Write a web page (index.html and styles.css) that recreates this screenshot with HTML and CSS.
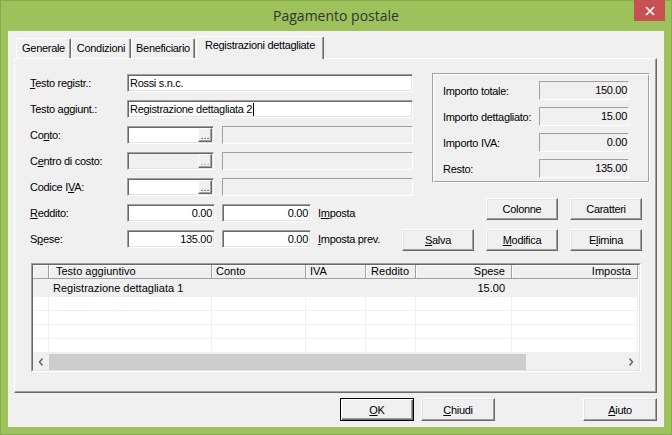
FILE: index.html
```html
<!DOCTYPE html>
<html lang="it">
<head>
<meta charset="utf-8">
<title>Pagamento postale</title>
<link rel="stylesheet" href="styles.css">
</head>
<body>
<div class="window">
  <div class="titlebar">
    <span></span>
    <span class="title">Pagamento postale</span>
    <span class="close"><svg width="10" height="10" viewBox="0 0 10 10"><path d="M1 1L9 9M9 1L1 9" stroke="#fff" stroke-width="1.7"/></svg></span>
  </div>
  <div class="client">
    <div class="tabs">
      <div class="tab t1">Generale</div>
      <div class="tab t2">Condizioni</div>
      <div class="tab t3">Beneficiario</div>
      <div class="tab active">Registrazioni dettagliate</div>
    </div>
    <div class="panel">
      <div class="top">
        <div class="form">
          <div class="row"><span class="lbl"><u>T</u>esto registr.:</span><div class="edit wide">Rossi s.n.c.</div></div>
          <div class="row"><span class="lbl">Testo a<u>g</u>giunt.:</span><div class="edit wide">Registrazione dettagliata 2<span class="caret"></span></div></div>
          <div class="row"><span class="lbl">Co<u>n</u>to:</span><div class="combo"><span class="dots">...</span></div><div class="static"></div></div>
          <div class="row"><span class="lbl">C<u>e</u>ntro di costo:</span><div class="combo disabled"><span class="dots">...</span></div><div class="static"></div></div>
          <div class="row"><span class="lbl">Codice I<u>V</u>A:</span><div class="combo"><span class="dots">...</span></div><div class="static"></div></div>
        </div>
        <div class="group">
          <div class="grow"><span class="glbl">Importo totale:</span><div class="ro">150.00</div></div>
          <div class="grow"><span class="glbl">Importo dettagliato:</span><div class="ro">15.00</div></div>
          <div class="grow"><span class="glbl">Importo IVA:</span><div class="ro">0.00</div></div>
          <div class="grow"><span class="glbl">Resto:</span><div class="ro">135.00</div></div>
        </div>
      </div>
      <div class="lower">
        <div class="lower-form">
          <div class="row"><span class="lbl"><u>R</u>eddito:</span><div class="edit num n1">0.00</div><div class="edit num n2">0.00</div><span class="after">I<u>m</u>posta</span></div>
          <div class="row"><span class="lbl">S<u>p</u>ese:</span><div class="edit num n1">135.00</div><div class="edit num n2">0.00</div><span class="after"><u>I</u>mposta prev.</span></div>
        </div>
        <div class="actions">
          <button class="btn b-col">Colonne</button>
          <button class="btn">Caratteri</button>
          <button class="btn"><u>S</u>alva</button>
          <button class="btn"><u>M</u>odifica</button>
          <button class="btn">E<u>l</u>imina</button>
        </div>
      </div>
      <div class="grid">
        <div class="grid-in">
          <div class="g-body">
            <div class="g-row g-head">
              <div class="gc"></div>
              <div class="gc c1">Testo aggiuntivo</div>
              <div class="gc">Conto</div>
              <div class="gc">IVA</div>
              <div class="gc r">Reddito</div>
              <div class="gc r">Spese</div>
              <div class="gc r">Imposta</div>
            </div>
            <div class="g-row g-first">
              <div class="gc"></div>
              <div class="gc">Registrazione dettagliata 1</div>
              <div class="gc"></div>
              <div class="gc"></div>
              <div class="gc"></div>
              <div class="gc r">15.00</div>
              <div class="gc"></div>
            </div>
            <div class="g-row g-empty"><div class="gc"></div><div class="gc"></div><div class="gc"></div><div class="gc"></div><div class="gc"></div><div class="gc"></div><div class="gc"></div></div>
            <div class="g-row g-empty"><div class="gc"></div><div class="gc"></div><div class="gc"></div><div class="gc"></div><div class="gc"></div><div class="gc"></div><div class="gc"></div></div>
            <div class="g-row g-empty"><div class="gc"></div><div class="gc"></div><div class="gc"></div><div class="gc"></div><div class="gc"></div><div class="gc"></div><div class="gc"></div></div>
            <div class="g-row g-empty"><div class="gc"></div><div class="gc"></div><div class="gc"></div><div class="gc"></div><div class="gc"></div><div class="gc"></div><div class="gc"></div></div>
          </div>
          <div class="hscroll">
            <span class="arrow"><svg width="6" height="8" viewBox="0 0 6 8"><path d="M4.5 0.5L1.5 4L4.5 7.5" fill="none" stroke="#606060" stroke-width="1.4"/></svg></span>
            <span class="thumb"></span>
            <span class="track"></span>
            <span class="arrow"><svg width="6" height="8" viewBox="0 0 6 8"><path d="M1.5 0.5L4.5 4L1.5 7.5" fill="none" stroke="#606060" stroke-width="1.4"/></svg></span>
          </div>
        </div>
      </div>
    </div>
    <div class="footer">
      <button class="btn dlg default"><u>O</u>K</button>
      <button class="btn dlg chiudi"><u>C</u>hiudi</button>
      <button class="btn dlg"><u>A</u>iuto</button>
    </div>
  </div>
</div>
</body>
</html>
```

FILE: styles.css
```css
* { box-sizing: border-box; margin: 0; padding: 0; }
html, body { width: 672px; height: 435px; overflow: hidden; }
body {
  background: #9dc15b;
  font-family: "Liberation Sans", Arial, sans-serif;
  font-size: 11px;
  letter-spacing: -0.3px;
  color: #000;
}
.window {
  width: 672px; height: 435px;
  background: #9dc15b;
  border: 1px solid #86aa4c;
  display: flex; flex-direction: column;
}
.titlebar {
  height: 30px;
  display: grid;
  grid-template-columns: 1fr auto 1fr;
  align-items: start;
}
.title {
  font-family: "Open Sans", "Noto Sans", sans-serif;
  font-size: 14px;
  letter-spacing: 0;
  color: #333;
  line-height: 30px;
}
.close {
  justify-self: end;
  margin: -1px 6px 0 0;
  width: 31px; height: 21px;
  background: #c75050;
  display: flex; align-items: center; justify-content: center;
}
.client {
  margin: 0 7px;
  width: 656px; height: 396px;
  background: #f0f0f0;
  padding-top: 5px;
}
.tabs { display: flex; align-items: flex-end; margin-left: 8px; height: 22px; }
.tab {
  height: 20px;
  background: #f0f0f0;
  border-left: 1px solid #fff;
  border-top: 1px solid #fff;
  border-right: 1px solid #696969;
  box-shadow: inset -1px 0 0 #a0a0a0;
  border-radius: 2px 2px 0 0;
  text-align: center;
  line-height: 17px;
  padding-top: 1px;
  white-space: nowrap;
}
.t1 { width: 55px; }
.t2 { width: 60px; }
.t3 { width: 64px; }
.tab.active {
  width: 128px; height: 23px;
  margin-left: 1px; margin-bottom: -1px;
  padding-top: 0;
  position: relative; z-index: 1;
}
.panel {
  margin-left: 6px;
  width: 643px; height: 335px;
  border: 1px solid;
  border-color: #fff #696969 #696969 #fff;
  box-shadow: inset -1px -1px 0 #a0a0a0;
  padding: 14px 0 0 15px;
}
.top { display: flex; align-items: flex-start; height: 123px; }
.form { width: 383px; margin-top: 1px; display: flex; flex-direction: column; gap: 8px; }
.row { display: flex; align-items: center; height: 18px; }
.lbl { width: 97px; flex: none; white-space: nowrap; }
.edit {
  height: 18px;
  background: #fff;
  border: 1px solid;
  border-color: #a0a0a0 #fff #fff #a0a0a0;
  box-shadow: inset 1px 1px 0 #696969, inset -1px -1px 0 #e3e3e3;
  padding: 0 2px;
  line-height: 16px;
  white-space: nowrap;
  overflow: hidden;
  flex: none;
}
.wide { width: 286px; }
.caret { display: inline-block; width: 1px; height: 13px; background: #000; vertical-align: -3px; margin-left: 1px; }
.combo {
  width: 87px; height: 18px; flex: none;
  background: #fff;
  border: 1px solid;
  border-color: #a0a0a0 #fff #fff #a0a0a0;
  box-shadow: inset 1px 1px 0 #696969, inset -1px -1px 0 #e3e3e3;
  padding: 1px;
  display: flex; justify-content: flex-end;
}
.combo.disabled { background: #f0f0f0; }
.dots {
  width: 14px; height: 14px;
  background: #f0f0f0;
  border: 1px solid;
  border-color: #fff #696969 #696969 #fff;
  box-shadow: inset -1px -1px 0 #a0a0a0;
  line-height: 12px;
  text-align: center;
  letter-spacing: 0;
  color: #303030;
}
.combo.disabled .dots { color: #a0a0a0; }
.static {
  width: 191px; height: 18px; flex: none;
  margin-left: 8px;
  background: #f0f0f0;
  border: 1px solid;
  border-color: #a0a0a0 #fff #fff #a0a0a0;
}
.group {
  margin-left: 19px;
  width: 218px; height: 110px;
  border: 1px solid;
  border-color: #a0a0a0 #fff #fff #a0a0a0;
  box-shadow: inset 1px 1px 0 #fff, inset -1px -1px 0 #a0a0a0;
  padding: 7px 0 0 10px;
  display: flex; flex-direction: column; gap: 7px;
}
.grow { display: flex; align-items: center; height: 19px; }
.glbl { width: 96px; flex: none; white-space: nowrap; }
.ro {
  width: 90px; height: 19px;
  border: 1px solid;
  border-color: #a0a0a0 #fff #fff #a0a0a0;
  text-align: right;
  padding-right: 1px;
  line-height: 17px;
}
.lower { display: flex; margin-top: 2px; }
.lower-form { width: 372px; padding-top: 6px; display: flex; flex-direction: column; gap: 8px; }
.num { text-align: right; }
.n1 { width: 88px; }
.n2 { width: 89px; margin-left: 7px; }
.after { margin-left: 7px; white-space: nowrap; }
.actions {
  display: grid;
  grid-template-columns: repeat(3, 72px);
  grid-auto-rows: 22px;
  column-gap: 12px; row-gap: 9px;
}
.b-col { grid-column: 2; }
.btn {
  font: inherit; letter-spacing: inherit; color: #000;
  background: #f0f0f0;
  border: 1px solid;
  border-color: #fff #696969 #696969 #fff;
  box-shadow: inset -1px -1px 0 #a0a0a0, inset 1px 1px 0 #e3e3e3;
  text-align: center;
}
.grid {
  margin: 12px 0 0 1px;
  width: 610px; height: 109px;
  border: 1px solid;
  border-color: #a0a0a0 #fff #fff #a0a0a0;
  letter-spacing: 0;
}
.grid-in {
  height: 100%;
  border: 1px solid;
  border-color: #696969 #e3e3e3 #e3e3e3 #696969;
  background: #fff;
  display: flex; flex-direction: column;
}
.g-body { height: 88px; overflow: hidden; flex: none; }
.g-row { display: grid; grid-template-columns: 16px 163px 94px 60px 50px 96px 126px; }
.gc { white-space: nowrap; overflow: hidden; }
.g-head .gc {
  height: 14px;
  background: #f0f0f0;
  border-right: 1px solid #a0a0a0;
  border-bottom: 1px solid #a0a0a0;
  box-shadow: inset 1px 1px 0 #fff;
  line-height: 13px;
  padding: 0 4px;
}
.g-head .c1 { padding-left: 7px; }
.g-head .gc.r { text-align: right; padding-right: 6px; }
.g-first .gc { height: 18px; background: #f0f0f0; line-height: 18px; padding: 0 4px; }
.g-first .gc.r { text-align: right; padding-right: 7px; }
.g-empty .gc { height: 14px; border-right: 1px solid #f0f0f0; border-bottom: 1px solid #f0f0f0; }
.hscroll { height: 17px; display: flex; background: #f0f0f0; flex: none; }
.arrow { width: 16px; flex: none; display: flex; align-items: center; justify-content: center; }
.thumb { width: 477px; flex: none; background: #cdcdcd; margin-top: 1px; }
.track { flex: 1; }
.footer { display: flex; justify-content: flex-end; padding-right: 7px; margin-top: 5px; }
.dlg { width: 74px; height: 23px; }
.default {
  border-color: #000;
  box-shadow: inset 1px 1px 0 #fff, inset -1px -1px 0 #696969, inset -2px -2px 0 #a0a0a0;
  margin-right: 7px;
}
.chiudi { margin-right: 88px; }
```
